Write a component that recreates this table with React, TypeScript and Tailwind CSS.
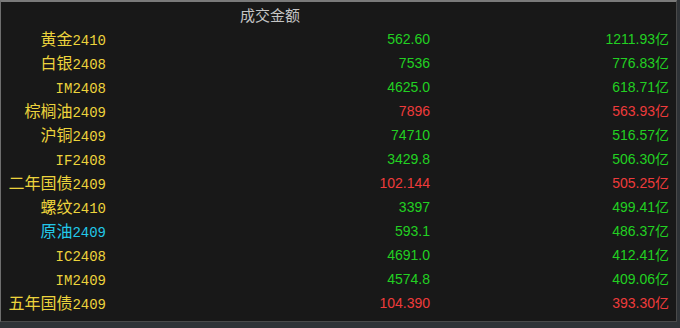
import React from "react";

type Row = {
  name: string;
  code: string;
  price: string;
  amount: string;
  up: boolean;
  cyan?: boolean;
};

const rows: Row[] = [
  { name: "黄金", code: "2410", price: "562.60", amount: "1211.93", up: false },
  { name: "白银", code: "2408", price: "7536", amount: "776.83", up: false },
  { name: "", code: "IM2408", price: "4625.0", amount: "618.71", up: false },
  { name: "棕榈油", code: "2409", price: "7896", amount: "563.93", up: true },
  { name: "沪铜", code: "2409", price: "74710", amount: "516.57", up: false },
  { name: "", code: "IF2408", price: "3429.8", amount: "506.30", up: false },
  { name: "二年国债", code: "2409", price: "102.144", amount: "505.25", up: true },
  { name: "螺纹", code: "2410", price: "3397", amount: "499.41", up: false },
  { name: "原油", code: "2409", price: "593.1", amount: "486.37", up: false, cyan: true },
  { name: "", code: "IC2408", price: "4691.0", amount: "412.41", up: false },
  { name: "", code: "IM2409", price: "4574.8", amount: "409.06", up: false },
  { name: "五年国债", code: "2409", price: "104.390", amount: "393.30", up: true },
];

export default function App() {
  return (
    <div className="w-[680px] h-[328px] bg-[#2f3337] overflow-hidden">
      <div className="w-[677px] h-[322px] bg-[#181818] border-l border-t-2 border-r border-b border-l-[#6e6e6e] border-t-[#7a7a7a] border-r-[#4a4a4a] border-b-[#4a4a4a]">
        {/* Header */}
        <div className="h-[24px] flex items-center pl-[239px]">
          <span className="text-[15px] leading-none text-[#c4c4c4] font-['Noto_Sans_CJK_SC',sans-serif]">
            成交金额
          </span>
        </div>

        {/* Rows */}
        {rows.map((r, i) => {
          const nameColor = r.cyan ? "text-[#22c8e8]" : "text-[#ecd33c]";
          const valColor = r.up ? "text-[#ee3b3b]" : "text-[#22d022]";
          return (
            <div
              key={i}
              className="grid grid-cols-[105px_324px_239px] h-[24px] items-center"
            >
              <div className={`text-right whitespace-nowrap ${nameColor}`}>
                <span className="text-[16px] font-['Noto_Sans_CJK_SC',sans-serif]">
                  {r.name}
                </span>
                <span className="text-[14px] font-['Liberation_Mono','Noto_Sans_CJK_SC',monospace]">
                  {r.code}
                </span>
              </div>
              <div
                className={`text-right text-[14px] font-['Liberation_Sans','Noto_Sans_CJK_SC',sans-serif] ${valColor}`}
              >
                {r.price}
              </div>
              <div
                className={`text-right text-[14px] whitespace-nowrap font-['Liberation_Sans','Noto_Sans_CJK_SC',sans-serif] ${valColor}`}
              >
                {r.amount}
                <span className="font-['Noto_Sans_CJK_SC',sans-serif]">亿</span>
              </div>
            </div>
          );
        })}
      </div>
    </div>
  );
}
